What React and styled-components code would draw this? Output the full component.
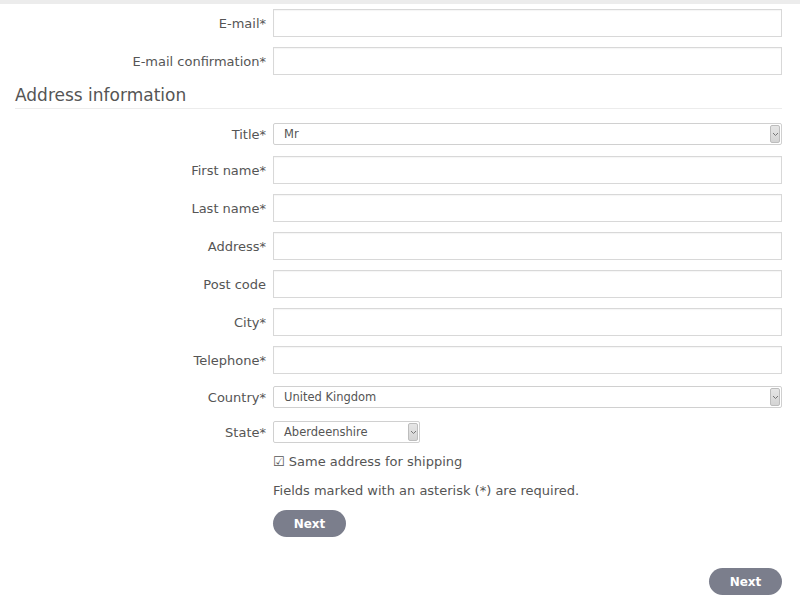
import styled, { createGlobalStyle } from "styled-components";

const GlobalStyle = createGlobalStyle`
  body {
    margin: 0;
    background: #fff;
    font-family: "DejaVu Sans", "Liberation Sans", sans-serif;
    color: #555;
  }
`;

const Field = ({ label, compact, children }) => (
  <Row $compact={compact}>
    <Label>{label}</Label>
    {children}
  </Row>
);

const Select = ({ value, width }) => (
  <SelectBox $width={width}>
    <span>{value}</span>
    <Arrow>
      <svg width="7" height="5" viewBox="0 0 7 5">
        <path d="M1 1 L3.5 3.5 L6 1" fill="none" stroke="#777" strokeWidth="1" />
      </svg>
    </Arrow>
  </SelectBox>
);

const App = () => {
  return (
    <>
      <GlobalStyle />
      <TopBar />
      <Page>
        <Field label="E-mail*">
          <Input />
        </Field>
        <Field label="E-mail confirmation*">
          <Input />
        </Field>

        <Heading>Address information</Heading>

        <Fields>
          <Field label="Title*" compact>
            <Select value="Mr" />
          </Field>
          <Field label="First name*">
            <Input />
          </Field>
          <Field label="Last name*">
            <Input />
          </Field>
          <Field label="Address*">
            <Input />
          </Field>
          <Field label="Post code">
            <Input />
          </Field>
          <Field label="City*">
            <Input />
          </Field>
          <Field label="Telephone*">
            <Input />
          </Field>
          <Field label="Country*" compact>
            <Select value="United Kingdom" />
          </Field>
          <Field label="State*" compact>
            <Select value="Aberdeenshire" width="147px" />
          </Field>
        </Fields>

        <Footer>
          <Check>☑ Same address for shipping</Check>
          <Note>Fields marked with an asterisk (*) are required.</Note>
          <Button>Next</Button>
        </Footer>

        <Bottom>
          <Button>Next</Button>
        </Bottom>
      </Page>
    </>
  );
};

const TopBar = styled.div`
  height: 4px;
  background: #ececec;
`;

const Page = styled.main`
  padding: 5px 18px 0 15px;
`;

const Row = styled.div`
  display: flex;
  align-items: center;
  min-height: ${(p) => (p.$compact ? "22px" : "28px")};
  margin-top: ${(p) => (p.$compact ? "2px" : "0")};
  margin-bottom: ${(p) => (p.$compact ? "11px" : "10px")};
`;

const Label = styled.label`
  width: 251px;
  flex: none;
  padding-right: 7px;
  text-align: right;
  font-size: 13px;
  color: #555;
`;

const Input = styled.div`
  flex: 1;
  height: 26px;
  border: 1px solid #d8d8d8;
  box-shadow: inset 0 1px 1px rgba(0, 0, 0, 0.04);
  background: #fff;
`;

const SelectBox = styled.div`
  position: relative;
  flex: ${(p) => (p.$width ? "none" : "1")};
  width: ${(p) => p.$width || "auto"};
  height: 22px;
  box-sizing: border-box;
  border: 1px solid #d0d0d0;
  border-radius: 2px;
  background: #fff;
  display: flex;
  align-items: center;
  padding-left: 10px;
  font-size: 11.5px;
  color: #555;
`;

const Arrow = styled.span`
  position: absolute;
  top: 1px;
  right: 1px;
  bottom: 1px;
  width: 10px;
  background: linear-gradient(#e6e6e6, #d4d4d4);
  border: 1px solid #bdbdbd;
  border-radius: 2px;
  box-sizing: border-box;
  display: flex;
  align-items: center;
  justify-content: center;
`;

const Heading = styled.h2`
  margin: 0 0 12px;
  padding-bottom: 3px;
  border-bottom: 1px solid #ececec;
  font-size: 17px;
  font-weight: normal;
  color: #555;
  line-height: 20px;
`;

const Fields = styled.div`
  display: flex;
  flex-direction: column;
`;

const Footer = styled.div`
  display: flex;
  flex-direction: column;
  align-items: flex-start;
  padding-left: 258px;
`;

const Check = styled.div`
  font-size: 13px;
  line-height: 16px;
  color: #555;
`;

const Note = styled.p`
  margin: 13px 0 11px;
  font-size: 13px;
  line-height: 16px;
  color: #555;
`;

const Button = styled.button`
  width: 73px;
  height: 27px;
  border: none;
  border-radius: 14px;
  background: #7b7e8c;
  color: #fff;
  font-family: inherit;
  font-size: 12px;
  font-weight: bold;
  cursor: pointer;
`;

const Bottom = styled.div`
  display: flex;
  justify-content: flex-end;
  margin-top: 31px;
`;

export default App;
